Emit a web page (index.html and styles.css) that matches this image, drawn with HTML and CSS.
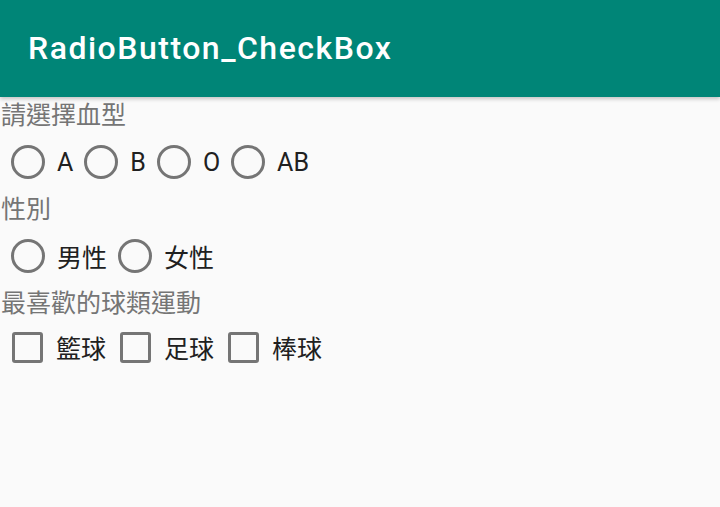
FILE: index.html
```html
<!DOCTYPE html>
<html lang="zh-Hant">
<head>
<meta charset="utf-8">
<title>RadioButton_CheckBox</title>
<link rel="stylesheet" href="styles.css">
</head>
<body>
<header class="appbar">
  <h1 class="title">RadioButton_CheckBox</h1>
</header>
<main class="content">
  <div class="label">請選擇血型</div>
  <div class="row">
    <label class="item"><span class="radio"></span><span class="text">A</span></label>
    <label class="item"><span class="radio"></span><span class="text">B</span></label>
    <label class="item"><span class="radio"></span><span class="text">O</span></label>
    <label class="item"><span class="radio"></span><span class="text">AB</span></label>
  </div>
  <div class="label">性別</div>
  <div class="row">
    <label class="item"><span class="radio"></span><span class="text">男性</span></label>
    <label class="item"><span class="radio"></span><span class="text">女性</span></label>
  </div>
  <div class="label">最喜歡的球類運動</div>
  <div class="row row-check">
    <label class="item"><span class="check"></span><span class="text">籃球</span></label>
    <label class="item"><span class="check"></span><span class="text">足球</span></label>
    <label class="item"><span class="check"></span><span class="text">棒球</span></label>
  </div>
</main>
</body>
</html>
```
FILE: styles.css
```css
html, body {
  margin: 0;
  padding: 0;
}
body {
  width: 720px;
  height: 507px;
  background: #fafafa;
  font-family: Roboto, "Noto Sans CJK TC", sans-serif;
  overflow: hidden;
}
.appbar {
  box-sizing: border-box;
  height: 97px;
  background: #008577;
  padding: 29px 0 0 28px;
  box-shadow: 0 2px 4px rgba(0, 0, 0, 0.22);
  position: relative;
}
.title {
  margin: 0;
  font-family: Roboto, sans-serif;
  font-weight: 500;
  font-size: 32px;
  letter-spacing: 1.5px;
  line-height: 38px;
  color: #ffffff;
}
.content {
  padding-top: 3px;
}
.label {
  padding: 2px 0 0 1px;
  font-size: 25px;
  line-height: 28px;
  color: #757575;
}
.row {
  display: flex;
  align-items: center;
  height: 64px;
}
.item {
  display: flex;
  align-items: center;
}
.radio {
  box-sizing: border-box;
  width: 34px;
  height: 34px;
  border: 3px solid #757575;
  border-radius: 50%;
  margin: 0 12px 0 11px;
}
.row-check {
  margin-left: -2px;
  margin-top: -3px;
}
.check {
  box-sizing: border-box;
  width: 31px;
  height: 31px;
  border: 3px solid #757575;
  border-radius: 3px;
  margin: 0 13px 0 14px;
}
.text {
  font-size: 25px;
  color: #202020;
}
```
